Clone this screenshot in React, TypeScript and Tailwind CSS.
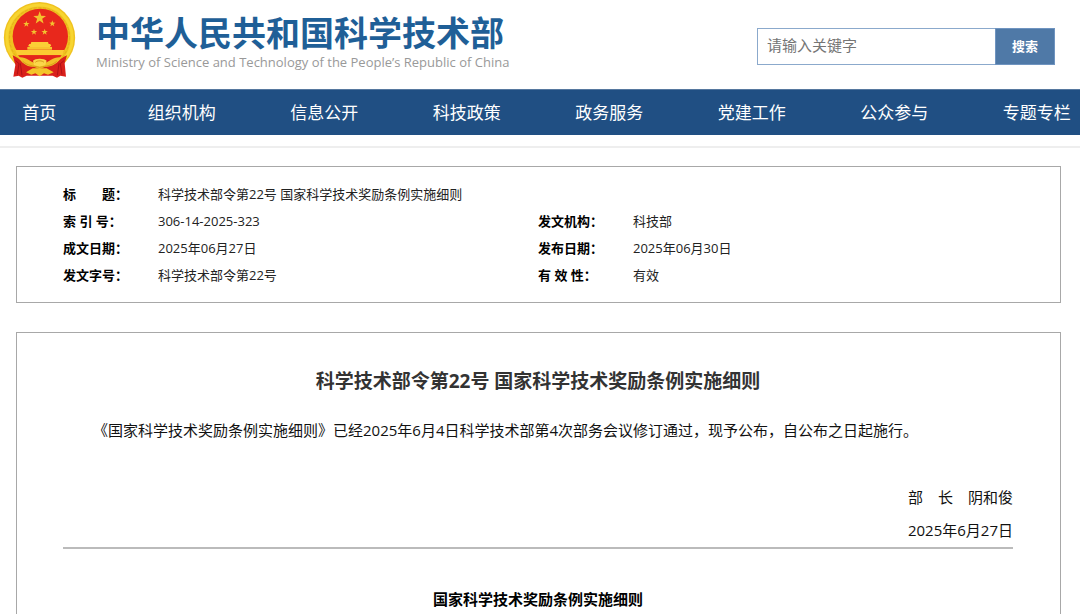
const navItems = [
  "首页",
  "组织机构",
  "信息公开",
  "科技政策",
  "政务服务",
  "党建工作",
  "公众参与",
  "专题专栏",
];

const smallStars = [
  [79, 72],
  [157, 71],
  [102, 96],
  [134, 96],
];

function Star({ x, y, r }: { x: number; y: number; r: number }) {
  const points = Array.from({ length: 10 }, (_, i) => {
    const radius = i % 2 === 0 ? r : r * 0.4;
    const angle = (Math.PI / 5) * i - Math.PI / 2;
    return `${x + radius * Math.cos(angle)},${y + radius * Math.sin(angle)}`;
  }).join(" ");
  return <polygon points={points} fill="#f3c22f" />;
}

function Emblem() {
  return (
    <svg
      className="h-[78px] w-[73px] shrink-0"
      viewBox="9 3 219 234"
      role="img"
      aria-label="国徽"
    >
      <circle cx="118.500" cy="113" r="107" fill="#f0c21f" />
      <circle cx="118.500" cy="113" r="98" fill="none" stroke="#f7d531" strokeWidth="9" />
      <circle cx="118.500" cy="113" r="90" fill="none" stroke="#e2b01a" strokeWidth="3" strokeDasharray="9 5" />
      <circle cx="121" cy="109" r="83" fill="#e8281c" />
      <Star x={119} y={54} r={20} />
      {smallStars.map(([x, y]) => (
        <Star key={x} x={x} y={y} r={10} />
      ))}
      {/* gate */}
      <path d="M94 126H144L146 132H151L154 139H150V148H89V139H84L88 132H92Z" fill="#fbcf36" />
      <path d="M82 141H156V149H82Z" fill="#f7c42f" />
      <path d="M46 150H193L187 166H52Z" fill="#fbcb32" />
      <path d="M54 166H185L176 177H64Z" fill="#e4251b" />
      {/* drapery */}
      <path d="M38 166C50 172 61 178 68 187L100 178H140L170 187C179 180 188 171 201 166L194 190L198 230L181 227L171 233L158 227H80L67 233L56 227L40 230L46 195Z" fill="#d9201b" />
      <path d="M47 182L57 191L52 223M61 190L66 226M192 182L181 191L186 223M177 190L172 226" fill="none" stroke="#b01217" strokeWidth="3" />
      {/* wheat stalks and cog */}
      <path d="M55 172C77 169 91 184 105 190H133C148 184 161 169 184 172C174 190 154 202 136 200L119 207L101 200C81 202 64 188 55 172Z" fill="#f2c028" />
      <path d="M99 182C104 174 134 174 140 182L136 195L119 200L102 195Z" fill="#fbd64a" />
      <path d="M106 187C111 181 127 181 132 187" fill="none" stroke="#d89c1a" strokeWidth="3" />
      <path d="M68 184C83 197 98 198 119 202C140 198 156 197 170 184" fill="none" stroke="#d89c1a" strokeWidth="3" />
      <path d="M78 217L98 205H140L161 217L144 224L132 220L119 229L106 220L94 224Z" fill="#f4c529" />
    </svg>
  );
}

function SiteHeader() {
  return (
    <header className="flex h-[89px] items-start justify-between pr-[25px] pl-[3px]">
      <div className="flex items-start gap-5 pt-px">
        <Emblem />
        <div className="pt-3">
          <div className="text-[34px] leading-10 font-bold whitespace-nowrap text-[#1f5f97]">
            中华人民共和国科学技术部
          </div>
          <div className="text-[13px] leading-[18px] whitespace-nowrap text-[#999]">
            Ministry of Science and Technology of the People’s Republic of China
          </div>
        </div>
      </div>
      <form className="mt-7 flex h-[37px]" onSubmit={(e) => e.preventDefault()}>
        <input
          type="text"
          aria-label="请输入关键字"
          placeholder="请输入关键字"
          className="w-[238px] border border-r-0 border-[#8ba9cc] pb-0.5 pl-[9px] text-[15px] outline-none placeholder:text-[#757575]"
        />
        <button
          type="submit"
          className="w-[60px] border border-[#6f94c0] bg-[#4f79a7] text-[13px] font-bold text-white"
        >
          搜索
        </button>
      </form>
    </header>
  );
}

function MainNav() {
  return (
    <nav className="overflow-hidden border-t border-[#56789f] bg-[#204f83]">
      <ul className="-mr-7 -ml-8 grid grid-cols-8">
        {navItems.map((item) => (
          <li key={item} className="text-center text-[17px] leading-[45px] text-white">
            <a href="#">{item}</a>
          </li>
        ))}
      </ul>
    </nav>
  );
}

function DocumentInfo() {
  return (
    <section className="border border-[#a8a8a8] pt-[14px] pr-[47px] pb-[13px] pl-[46px]">
      <table className="w-full table-fixed text-left text-[13px] leading-[27px] text-[#222]">
        <colgroup>
          <col className="w-1/10" />
          <col className="w-4/10" />
          <col className="w-1/10" />
          <col className="w-4/10" />
        </colgroup>
        <tbody className="[&_th]:font-bold [&_th]:text-black">
          <tr>
            <th scope="row">标　　题：</th>
            <td colSpan={3}>科学技术部令第22号 国家科学技术奖励条例实施细则</td>
          </tr>
          <tr>
            <th scope="row">索 引 号：</th>
            <td>306-14-2025-323</td>
            <th scope="row">发文机构：</th>
            <td>科技部</td>
          </tr>
          <tr>
            <th scope="row">成文日期：</th>
            <td>2025年06月27日</td>
            <th scope="row">发布日期：</th>
            <td>2025年06月30日</td>
          </tr>
          <tr>
            <th scope="row">发文字号：</th>
            <td>科学技术部令第22号</td>
            <th scope="row">有 效 性：</th>
            <td>有效</td>
          </tr>
        </tbody>
      </table>
    </section>
  );
}

function Article() {
  return (
    <article className="mt-[29px] border border-b-0 border-[#a8a8a8] pt-8 pr-[47px] pl-[46px] text-[15px] leading-[33px] text-[#111]">
      <h1 className="text-center text-[19px] font-bold text-[#333]">
        科学技术部令第22号 国家科学技术奖励条例实施细则
      </h1>
      <p className="mt-4 indent-[2em]">
        《国家科学技术奖励条例实施细则》已经2025年6月4日科学技术部第4次部务会议修订通过，现予公布，自公布之日起施行。
      </p>
      <div className="mt-[34px] text-right">
        <p>部　长　阴和俊</p>
        <p>2025年6月27日</p>
      </div>
      <hr className="border-t-2 border-[#bbb]" />
      <h2 className="mt-[34px] text-center font-bold text-black">
        国家科学技术奖励条例实施细则
      </h2>
    </article>
  );
}

export default function App() {
  return (
    <div
      lang="zh-CN"
      className="h-screen overflow-hidden bg-white font-['Open_Sans','Noto_Sans_CJK_SC',sans-serif]"
    >
      <SiteHeader />
      <MainNav />
      <div className="mt-[11px] border-t-2 border-[#eee]" />
      <main className="mt-[18px] mr-[19px] ml-4">
        <DocumentInfo />
        <Article />
      </main>
    </div>
  );
}
